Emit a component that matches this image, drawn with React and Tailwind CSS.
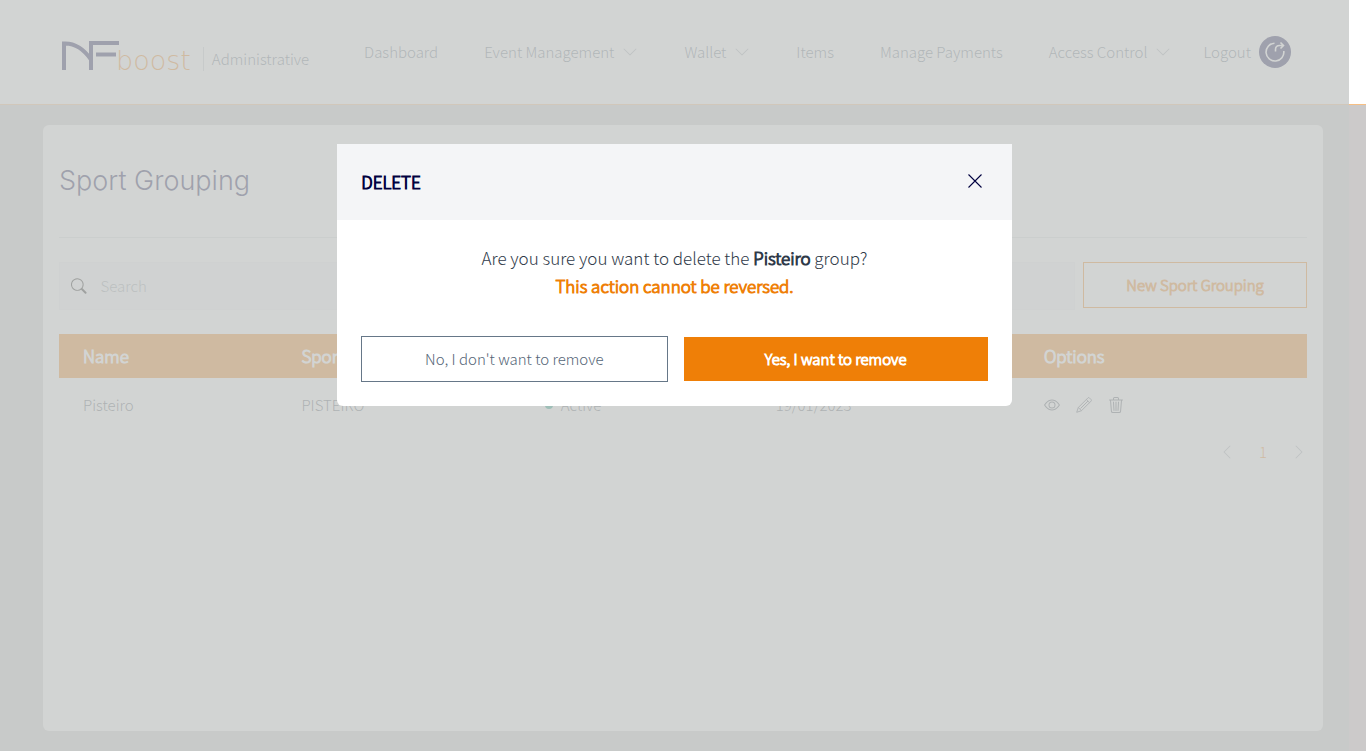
import React from "react";
import { BsChevronDown, BsChevronLeft, BsChevronRight, BsEye, BsSearch, BsTrash3 } from "react-icons/bs";

const navItems = [
  { label: "Dashboard" },
  { label: "Event Management", menu: true },
  { label: "Wallet", menu: true },
  { label: "Items" },
  { label: "Manage Payments" },
  { label: "Access Control", menu: true },
];

const columns = [
  { name: "Name", label: "Name", width: "w-[17.5%]" },
  { name: "Sport", label: "Sport", width: "w-[19.5%]" },
  { name: "Status", width: "w-[18.5%]" },
  { name: "Date", width: "w-[21.5%]" },
  { name: "Options", label: "Options", width: "w-[23%]" },
];

function Logo() {
  return (
    <div className="flex items-end" aria-label="NF boost">
      <svg width="58" height="30" viewBox="0 0 58 30" fill="none" stroke="#000040" strokeWidth="4" aria-hidden="true">
        <path d="M2 29V2.500C12 2 21 7 29 18.500" />
        <path d="M29 29V2H57" />
        <path d="M34 13.500H54" />
      </svg>
      <span className="-ml-1 font-['DejaVu_Sans'] text-[27px] leading-5 font-extralight text-[#ef7f07]">boost</span>
    </div>
  );
}

function Header() {
  return (
    <header className="flex h-[105px] items-center justify-between border-b border-[#ef7f07]/50 bg-white pr-[75px] pl-[62px] text-[#5a6a7a]">
      <div className="flex items-end pt-2">
        <Logo />
        <span className="ml-3 border-l border-[#c8cdd2] pl-2 leading-6">Administrative</span>
      </div>
      <div className="flex items-center gap-8">
        <nav className="flex items-center gap-[46px]">
          {navItems.map((item) => (
            <a key={item.label} href="#" className="flex items-center gap-2 whitespace-nowrap">
              {item.label}
              {item.menu && <BsChevronDown className="size-4 text-[#a4abb2]" />}
            </a>
          ))}
        </nav>
        <button type="button" className="flex items-center gap-2">
          Logout
          <span className="flex size-8 items-center justify-center rounded-full bg-[#000040]">
            <svg width="22" height="22" viewBox="0 0 22 22" fill="none" stroke="white" strokeWidth="1.6" aria-hidden="true">
              <path d="M10.500 2.200A8.900 8.900 0 1 0 19.800 10" />
              <path d="M11.500 10.500V8.500Q11.500 4.500 15.500 4.500H19M16.500 1.500L19.500 4.500L16.500 7.500" />
            </svg>
          </span>
        </button>
      </div>
    </header>
  );
}

function PencilIcon() {
  return (
    <svg width="16" height="16" viewBox="0 0 16 16" fill="none" stroke="currentColor" strokeWidth="0.9" strokeLinejoin="round" aria-hidden="true">
      <path d="M.7 15.300L2.300 10.500L12 .8Q12.700 .3 13.300 .8L15.200 2.700Q15.700 3.300 15.200 4L5.500 13.700Z" />
      <path d="M10.300 2.500L13.500 5.700M2.300 10.500L5.500 13.700M12 4L4.500 11.500" />
    </svg>
  );
}

function Content() {
  return (
    <main className="flex flex-1 flex-col px-[43px] py-5">
      <section className="flex-1 rounded-md bg-white px-4">
        <h1 className="border-b border-[#dcdfe2] pt-9 pb-9 font-['Inter'] text-[27px] leading-10 font-light text-[#000040]">
          Sport Grouping
        </h1>
        <div className="mt-6 flex items-start gap-2">
          <label className="flex h-12 flex-1 items-center gap-3.5 border border-[#eeeff2] bg-[#f4f5f7] px-[11px]">
            <BsSearch className="size-4" />
            <input type="search" aria-label="Search" placeholder="Search" className="w-full bg-transparent outline-none placeholder:text-[#8f979f]" />
          </label>
          <button type="button" className="h-[46px] w-56 border border-[#ef7f07] text-[#ef7f07] [-webkit-text-stroke:1px]">
            New Sport Grouping
          </button>
        </div>
        <table className="mt-6 w-full table-fixed text-left text-[#4b5460]">
          <thead className="bg-[#ef7f07] text-[17px] text-white">
            <tr className="h-11">
              {columns.map((column) => (
                <th key={column.name} aria-label={column.name} className={`${column.width} px-6 font-light [-webkit-text-stroke:1px]`}>
                  {column.label}
                </th>
              ))}
            </tr>
          </thead>
          <tbody>
            <tr className="h-[54px]">
              <td className="px-6">Pisteiro</td>
              <td className="px-6">PISTEIRO</td>
              <td className="px-6">
                <span className="flex items-center gap-2">
                  <span className="size-2 rounded-full bg-[#009578]" />
                  Active
                </span>
              </td>
              <td className="px-6">19/01/2023</td>
              <td className="px-6">
                <div className="flex gap-4">
                  <button type="button" aria-label="View"><BsEye className="size-4" /></button>
                  <button type="button" aria-label="Edit"><PencilIcon /></button>
                  <button type="button" aria-label="Delete"><BsTrash3 className="size-4" /></button>
                </div>
              </td>
            </tr>
          </tbody>
        </table>
        <div className="mt-2 flex items-center justify-end gap-6 text-[#a4abb2]">
          <button type="button" aria-label="Previous page"><BsChevronLeft className="size-4" /></button>
          <button type="button" className="text-[#ef7f07]">1</button>
          <button type="button" aria-label="Next page"><BsChevronRight className="size-4" /></button>
        </div>
      </section>
    </main>
  );
}

function DeleteDialog() {
  return (
    <div className="fixed inset-0 right-[17px] flex items-start justify-center bg-[#c7c9c8]/80 pt-36">
      <div role="dialog" aria-modal="true" aria-labelledby="dialog-title" className="w-1/2 rounded-b-md bg-white">
        <div className="flex h-[76px] items-center justify-between bg-[#f4f5f7] px-6 text-[#000040]">
          <h2 id="dialog-title" className="text-[17px] [-webkit-text-stroke:1px]">DELETE</h2>
          <button type="button" aria-label="Close" className="p-[5px]">
            <svg width="16" height="16" viewBox="0 0 16 16" stroke="currentColor" strokeWidth="1.1" aria-hidden="true">
              <path d="M1.500 .5L14.500 13.500M14.500 .5L1.500 13.500" />
            </svg>
          </button>
        </div>
        <div className="px-6 pt-6 pb-6">
          <p className="text-center text-[17px] leading-7 text-[#2f3a49]">
            Are you sure you want to delete the <strong className="font-light [-webkit-text-stroke:1px]">Pisteiro</strong> group?
            <br />
            <strong className="font-light text-[#ef7f07] [-webkit-text-stroke:1px]">This action cannot be reversed.</strong>
          </p>
          <div className="mt-9 flex items-center gap-4">
            <button type="button" className="h-[46px] flex-1 border border-[#667788] text-[#556677]">
              No, I don't want to remove
            </button>
            <button type="button" className="h-11 flex-1 bg-[#ef7f07] text-white [-webkit-text-stroke:1px]">
              Yes, I want to remove
            </button>
          </div>
        </div>
      </div>
    </div>
  );
}

export default function App() {
  return (
    <div className="flex min-h-screen flex-col bg-[#cccaca] font-['Noto_Sans_CJK_SC','Noto_Sans',sans-serif] text-[15px] leading-6 font-light">
      <Header />
      <Content />
      <DeleteDialog />
    </div>
  );
}
